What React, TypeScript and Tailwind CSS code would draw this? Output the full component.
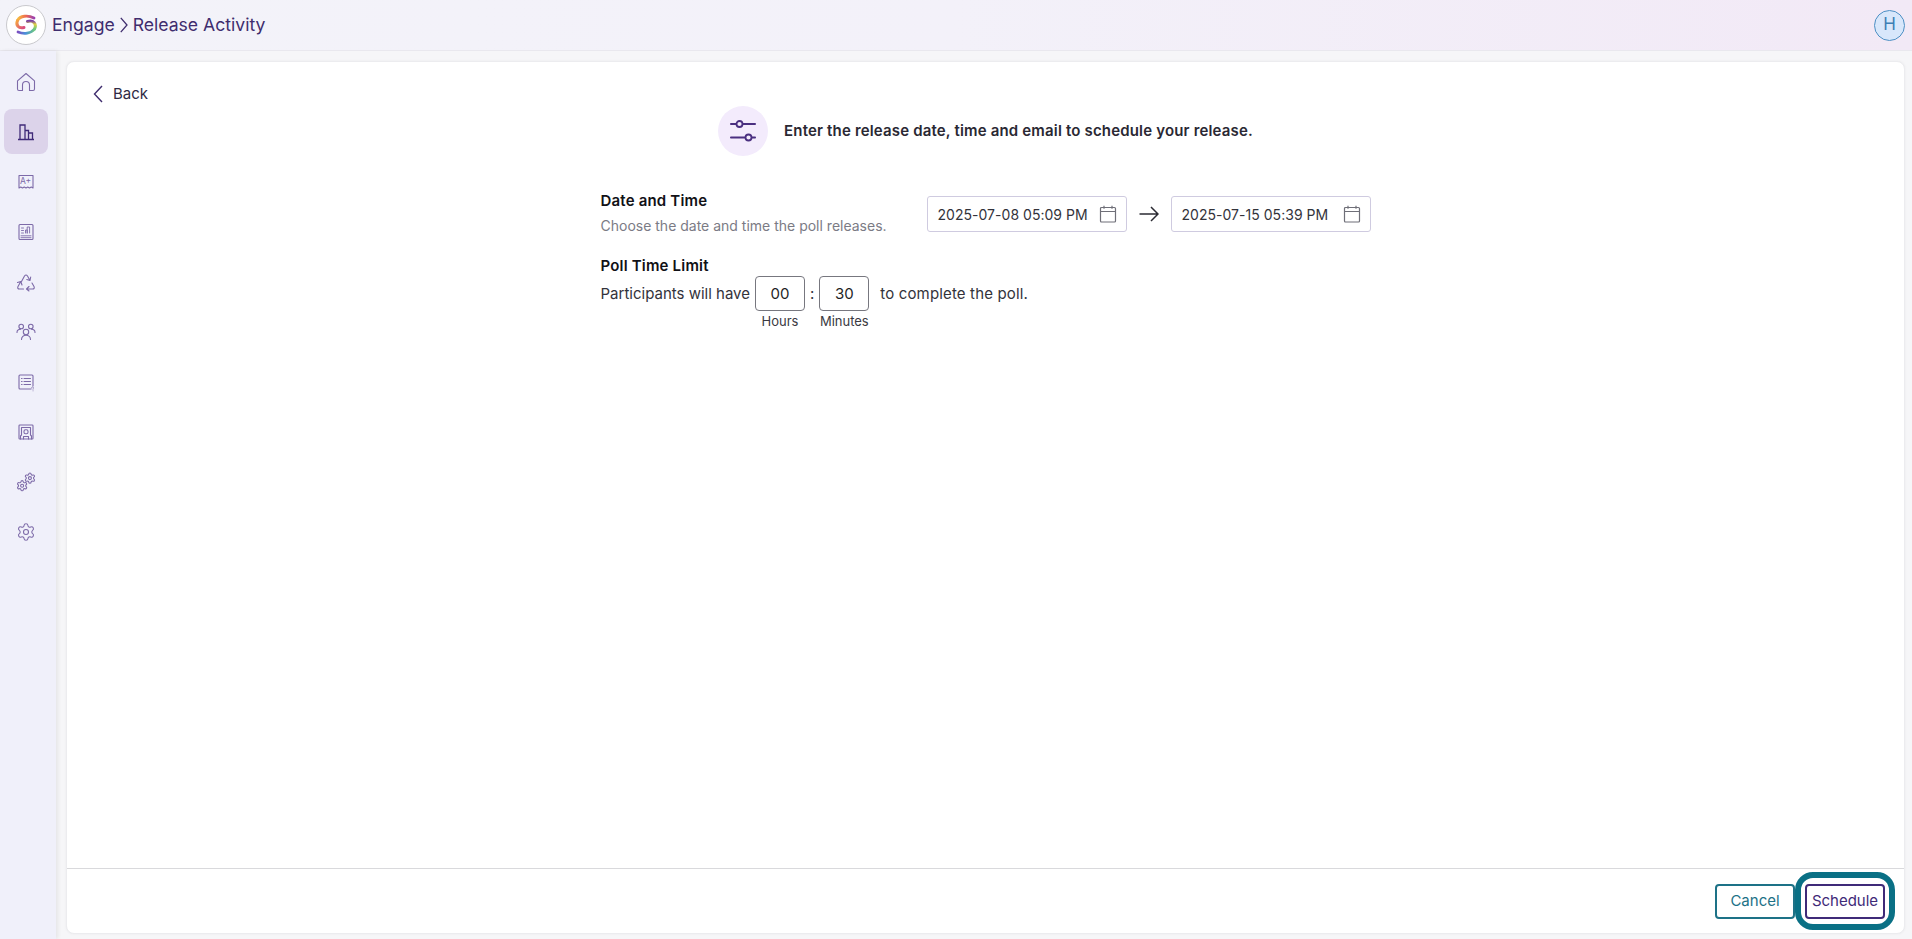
import React from "react";

const GEAR =
  "M9.671 4.136a2.34 2.34 0 0 1 4.659 0 2.34 2.34 0 0 0 3.319 1.915 2.34 2.34 0 0 1 2.33 4.033 2.34 2.34 0 0 0 0 3.831 2.34 2.34 0 0 1-2.33 4.033 2.34 2.34 0 0 0-3.319 1.915 2.34 2.34 0 0 1-4.659 0 2.34 2.34 0 0 0-3.32-1.915 2.34 2.34 0 0 1-2.33-4.033 2.34 2.34 0 0 0 0-3.831A2.34 2.34 0 0 1 6.35 6.051a2.34 2.34 0 0 0 3.32-1.915";

const Ico = ({ children }: { children: React.ReactNode }) => (
  <svg width="20" height="20" viewBox="0 0 20 20" fill="none" stroke="currentColor" strokeWidth="1.1" strokeLinecap="round" strokeLinejoin="round">
    {children}
  </svg>
);

const icons: React.ReactNode[] = [
  <Ico key="home">
    <path d="M1.500 8.800 10 1.500l8.500 7.300V17a1.500 1.500 0 0 1-1.500 1.500h-3.500V13a3.500 3.500 0 0 0-7 0v5.500H3A1.500 1.500 0 0 1 1.500 17Z" />
  </Ico>,
  <svg key="chart" width="20" height="20" viewBox="0 0 20 20" fill="none" stroke="currentColor" strokeWidth="1.3">
    <path d="M2 17.500h16M4 17.500V3h5v14.500M9 8.500h3.500v9M12.500 11h4v6.500" />
  </svg>,
  <Ico key="grade">
    <path d="M3 16V3.500h14V16l-1.750-1-1.750 1-1.750-1-1.750 1-1.750-1-1.750 1-1.750-1Z" />
    <text x="4" y="12.200" fontSize="8.500" fontFamily="Inter, sans-serif" fill="currentColor" stroke="none">A+</text>
  </Ico>,
  <Ico key="report">
    <rect x="3" y="2.500" width="14" height="15" rx="1" />
    <path d="M5 13.800h10M5 15.700h10M5.500 6h2M5.500 8.500h2M5.500 11h2M9.500 11V8h1.700v3M11.200 11V5h2.400v6" strokeWidth="0.9" />
  </Ico>,
  <Ico key="recycle">
    <path d="M5.500 9.500 8.500 4Q10 2 11.500 4L14 8.500M14.700 5 14 8.500 10.800 7.500" />
    <path d="M16 11l2 3.500Q19 17 16.500 17H10.500M13 14.500 10.500 17l2.500 2" />
    <path d="M7.500 17h-4Q1 17 2 14.500L4.500 10M1.500 10.500l3.300-1L6 13" />
  </Ico>,
  <Ico key="users">
    <circle cx="5.200" cy="4.500" r="2.300" />
    <circle cx="14.800" cy="4.500" r="2.300" />
    <circle cx="10" cy="10" r="2.700" />
    <path d="M1 10.500c0-2 1.500-3.200 3.500-3.200M19 10.500c0-2-1.500-3.200-3.500-3.200M5.500 17.500c0-2.500 2-4.300 4.500-4.300s4.500 1.800 4.500 4.300" />
  </Ico>,
  <Ico key="list">
    <path d="M15 17H4a1 1 0 0 1-1-1V4a1 1 0 0 1 1-1h12a1 1 0 0 1 1 1v10" />
    <path d="M5.500 6.500h.6M8 6.500h6.500M5.500 9.500h.6M8 9.500h6.500M5.500 12.500h.6M8 12.500h6.500" />
    <path d="M15.500 16a1 1 0 1 1 1.500.8v.5M17 18.800h.1" strokeWidth="0.7" />
  </Ico>,
  <Ico key="frame">
    <rect x="3" y="3" width="14" height="14" rx="0.800" />
    <path d="M4.500 17v-3l1-1V5.500h9V13l1 1v3" />
    <rect x="8" y="7.800" width="4" height="4" rx="1.500" />
    <path d="M7.500 17v-2.500h5V17" />
  </Ico>,
  <svg key="gears" width="20" height="20" viewBox="0 0 20 20" fill="none" stroke="currentColor" strokeLinecap="round" strokeLinejoin="round">
    <g transform="translate(7.800 0) scale(0.510)" strokeWidth="2.100">
      <path d={GEAR} />
      <circle cx="12" cy="12" r="3" />
    </g>
    <g transform="translate(0 7.600) scale(0.510)" strokeWidth="2.100">
      <path d={GEAR} />
      <circle cx="12" cy="12" r="3" />
    </g>
  </svg>,
  <svg key="gear" width="20" height="20" viewBox="0 0 24 24" fill="none" stroke="currentColor" strokeWidth="1.300" strokeLinecap="round" strokeLinejoin="round">
    <path d={GEAR} />
    <circle cx="12" cy="12" r="3" />
  </svg>,
];

const Logo = () => (
  <svg width="24" height="22" viewBox="0 0 24 22" fill="none" strokeLinecap="round">
    <defs>
      <linearGradient id="lgA" x1="1" y1="0" x2="0" y2="0">
        <stop offset="0" stopColor="#9a3fb0" />
        <stop offset="0.500" stopColor="#ef6a50" />
        <stop offset="1" stopColor="#f6c040" />
      </linearGradient>
      <linearGradient id="lgB" x1="0" y1="0" x2="1" y2="1">
        <stop offset="0" stopColor="#f6a640" />
        <stop offset="1" stopColor="#d84a80" />
      </linearGradient>
      <linearGradient id="lgC" x1="0" y1="0" x2="1" y2="0">
        <stop offset="0" stopColor="#7a4fc0" />
        <stop offset="0.450" stopColor="#4a90dc" />
        <stop offset="1" stopColor="#6cc880" />
      </linearGradient>
      <linearGradient id="lgD" x1="0" y1="1" x2="0" y2="0">
        <stop offset="0" stopColor="#6cc880" />
        <stop offset="0.600" stopColor="#e0d040" />
        <stop offset="1" stopColor="#7a3fa5" />
      </linearGradient>
    </defs>
    <path d="M20 4C14 1 6 1.500 3.500 6.500" stroke="url(#lgA)" strokeWidth="2.800" />
    <path d="M3.500 6.500C1.500 11 4.500 15 10 13.500" stroke="url(#lgB)" strokeWidth="3" />
    <path d="M4 18c6 2.500 13 1.500 16.500-3" stroke="url(#lgC)" strokeWidth="2.800" />
    <path d="M20.500 15C23 10.500 19.500 5.500 13.500 7.500" stroke="url(#lgD)" strokeWidth="3" />
  </svg>
);

const DateBox = ({ value }: { value: string }) => (
  <div className="flex h-[36px] w-[200px] items-center justify-between rounded-[3px] border border-[#cfcbe0] bg-white pl-[10px] pr-[9px] text-[14px] tracking-[0.03px] text-[#33333b]">
    <span>{value}</span>
    <svg width="18" height="18" viewBox="0 0 18 18" fill="none" stroke="#6f6f78" strokeWidth="1.200">
      <rect x="1.500" y="2.500" width="15" height="14.500" rx="1" />
      <path d="M1.500 6.500h15M5 0.800v3M13 0.800v3" />
    </svg>
  </div>
);

const TimeBox = ({ value, label }: { value: string; label: string }) => (
  <div className="flex w-[50px] flex-col items-center">
    <div className="flex h-[35px] w-full items-center justify-center rounded-[4px] border border-[#77777f] text-[15px] text-[#1f1f26]">{value}</div>
    <div className="mt-[2px] whitespace-nowrap text-[13px] leading-[16px] text-[#3a3a42]">{label}</div>
  </div>
);

const Section = ({ children, className }: { children: React.ReactNode; className?: string }) => (
  <div className={`text-[15px] font-semibold leading-[20px] tracking-[0.18px] text-[#111116] ${className ?? ""}`}>{children}</div>
);

export default function App() {
  return (
    <div className="flex h-screen w-full flex-col overflow-hidden bg-[#f6f6f8] font-['Inter',sans-serif]">
      <header className="flex h-[51px] shrink-0 items-center justify-between border-b border-[#e9e8ee] bg-gradient-to-r from-[#f3f3f9] via-[#f3f1f9] to-[#f2e9f6] pl-[6px] pr-[7px]">
        <div className="flex items-center">
          <div className="flex h-[40px] w-[40px] items-center justify-center rounded-full border border-[#c9c9cd] bg-white">
            <Logo />
          </div>
          <span className="ml-[6px] text-[17.600px] text-[#3f2d6e]">Engage</span>
          <svg width="8" height="16" viewBox="0 0 8 16" fill="none" stroke="#3f2d6e" strokeWidth="1.300" className="mx-[5px]">
            <path d="M0.800 0.800 7 8 0.800 15.200" />
          </svg>
          <span className="text-[17.600px] text-[#3f2d6e]">Release Activity</span>
        </div>
        <div className="flex h-[31px] w-[31px] items-center justify-center rounded-full border border-[#4d8fc4] bg-[#d8e7fb] text-[17px] text-[#3d7fb5]">H</div>
      </header>
      <div className="flex min-h-0 flex-1">
        <aside className="flex w-[56px] shrink-0 flex-col gap-[5px] bg-[#f0f0fa] pl-[4px] pt-[8px] shadow-[2px_0_4px_rgba(0,0,0,0.07)]">
          {icons.map((icon, i) => (
            <div key={i} className={`flex h-[45px] w-[44px] items-center justify-center rounded-[8px] ${i === 1 ? "bg-[#dcd3ea] text-[#3f2a78]" : "text-[#7d6aa8]"}`}>
              {icon}
            </div>
          ))}
        </aside>
        <main className="flex min-w-0 flex-1 pb-[5px] pl-[10px] pr-[7px] pt-[10px]">
          <div className="flex min-w-0 flex-1 flex-col rounded-[8px] border border-[#ececef] bg-white shadow-[0_0_3px_rgba(0,0,0,0.05)]">
            <div className="min-h-0 flex-1">
              <div className="mt-[20px] flex h-[24px] items-center pl-[26px] text-[#2f2a45]">
                <svg width="10" height="18" viewBox="0 0 10 18" fill="none" stroke="#3f2d6e" strokeWidth="1.400">
                  <path d="M9 1 1.500 9 9 17" />
                </svg>
                <span className="ml-[10px] text-[15px] leading-[24px]">Back</span>
              </div>
              <div className="flex items-center justify-center">
                <div className="flex h-[50px] w-[50px] items-center justify-center rounded-full bg-[#f3ebfc]">
                  <svg width="26" height="22" viewBox="0 0 26 22" fill="none" stroke="#4a2f80" strokeWidth="1.800" strokeLinecap="round">
                    <path d="M0.900 4h5M12.900 4h12.200M0.900 17.500h14M22 17.500h3.100" />
                    <circle cx="9.500" cy="4" r="3" />
                    <circle cx="18.500" cy="17.500" r="3" />
                  </svg>
                </div>
                <p className="ml-[16px] whitespace-nowrap text-[15px] font-semibold tracking-[0.17px] text-[#2a2833]">Enter the release date, time and email to schedule your release.</p>
              </div>
              <div className="mx-auto mt-[35px] w-[770px]">
                <div className="flex items-start justify-between">
                  <div>
                    <Section>Date and Time</Section>
                    <div className="mt-[5px] text-[14px] leading-[20px] text-[#7b7b85]">Choose the date and time the poll releases.</div>
                  </div>
                  <div className="mt-[5px] flex items-center">
                    <DateBox value="2025-07-08 05:09 PM" />
                    <svg width="20" height="16" viewBox="0 0 20 16" fill="none" stroke="#2b2b33" strokeWidth="1.500" className="mx-[12px]">
                      <path d="M0.500 8h18M12 1l7 7-7 7" />
                    </svg>
                    <DateBox value="2025-07-15 05:39 PM" />
                  </div>
                </div>
                <Section className="mt-[20px]">Poll Time Limit</Section>
                <div className="flex items-start text-[15px] leading-[35px] text-[#33333b]">
                  <span>Participants will have</span>
                  <div className="ml-[5px]"><TimeBox value="00" label="Hours" /></div>
                  <span className="mx-[5px]">:</span>
                  <TimeBox value="30" label="Minutes" />
                  <span className="ml-[11px] tracking-[0.15px]">to complete the poll.</span>
                </div>
              </div>
            </div>
            <div className="flex h-[65px] shrink-0 items-start justify-end gap-[10px] border-t border-[#d9d9dc] pr-[19px] pt-[15px]">
              <button className="h-[35px] w-[80px] rounded-[4px] border-2 border-[#1d7287] bg-white text-[15px] text-[#1d7287]">Cancel</button>
              <button className="relative h-[35px] w-[80px] rounded-[4px] border-2 border-[#3f2a78] bg-white text-[15px] text-[#3f2a78]">
                Schedule
                <span className="absolute bottom-[-13px] left-[-12px] right-[-12px] top-[-14px] rounded-[18px] border-[6px] border-[#0a7085]" />
              </button>
            </div>
          </div>
        </main>
      </div>
    </div>
  );
}
